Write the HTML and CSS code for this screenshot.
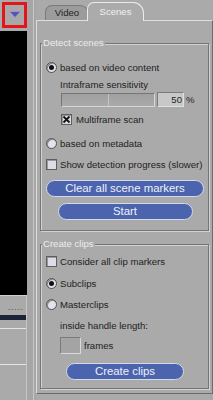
FILE: index.html
```
<!DOCTYPE html>
<html>
<head>
<meta charset="utf-8">
<link rel="stylesheet" href="styles.css">
</head>
<body>
<div class="app">
  <div class="side">
    <div class="side-top">
      <div class="drop">
        <svg width="12" height="7" viewBox="0 0 12 7"><polygon points="0.5,0.5 11.5,0.5 6,6.5" fill="#5656b0" stroke="#9a9ad8" stroke-width="0.8"/></svg>
      </div>
    </div>
    <div class="monitor"></div>
    <div class="side-bottom">
      <div class="dots">.....</div>
      <div class="navbar"></div>
      <div class="sgap"></div>
      <div class="sbox"></div>
      <div class="sbox last"></div>
    </div>
  </div>
  <div class="strip"></div>
  <div class="main">
    <div class="tabs">
      <div class="tab video">Video</div>
      <div class="tab scenes">Scenes</div>
    </div>
    <div class="panel">
      <div class="group g1">
        <div class="legend">Detect scenes</div>
        <div class="row mt11"><span class="radio on"></span><span>based on video content</span></div>
        <div class="row mt3 ind">Intraframe sensitivity</div>
        <div class="slider-row mt1">
          <div class="track"><div class="tick"></div></div>
          <div class="numbox">50</div>
          <span class="pct">%</span>
        </div>
        <div class="row mt5 ind1 gap4"><span class="check"><svg width="9" height="9" viewBox="0 0 9 9"><path d="M1.5 1.5 L7.5 7.5 M7.5 1.5 L1.5 7.5" stroke="#111" stroke-width="1.8"/></svg></span><span>Multiframe scan</span></div>
        <div class="row mt10"><span class="radio"></span><span>based on metadata</span></div>
        <div class="row mt7"><span class="check"></span><span>Show detection progress (slower)</span></div>
        <div class="btn clear mt9">Clear all scene markers</div>
        <div class="btn start mt6">Start</div>
      </div>
      <div class="group g2">
        <div class="legend">Create clips</div>
        <div class="row mt4"><span class="check"></span><span>Consider all clip markers</span></div>
        <div class="row mt8"><span class="radio on"></span><span>Subclips</span></div>
        <div class="row mt7"><span class="radio"></span><span>Masterclips</span></div>
        <div class="row mt7 ind">inside handle length:</div>
        <div class="frames-row mt5"><div class="fbox"></div><span>frames</span></div>
        <div class="btn create mt9">Create clips</div>
      </div>
    </div>
  </div>
</div>
</body>
</html>
```
FILE: styles.css
```
* { box-sizing: border-box; margin: 0; padding: 0; }
body {
  margin: 0;
  width: 213px;
  height: 400px;
  overflow: hidden;
  background: #aaaaaa;
  font-family: "Liberation Sans", Arial, sans-serif;
  font-size: 9.6px;
  color: #1e1e1e;
}
.app { display: flex; width: 213px; height: 400px; }

.side { width: 27px; display: flex; flex-direction: column; }
.side-top { height: 31px; padding: 2px 0 2px 2px; }
.drop {
  width: 25px; height: 26px;
  border: 3px solid #e3141c;
  background: #a8a8a8;
  display: flex; align-items: center; justify-content: center;
  padding-bottom: 2px;
}
.monitor { height: 264px; background: #000; }
.side-bottom {
  flex: 1;
  display: flex; flex-direction: column;
  border-top: 1px solid #cfcfcf;
  border-right: 1px solid #c6c6c6;
}
.dots {
  height: 19px; padding-top: 8px; padding-right: 2px;
  text-align: right; font-size: 8px; line-height: 8px;
  letter-spacing: 1px; color: #2a2a2a;
}
.navbar { height: 5px; background: #1b2336; }
.sgap { height: 8px; }
.sbox { height: 36px; border-top: 1px solid #e4e4e4; }
.sbox.last { flex: 1; }

.strip {
  width: 9px;
  background: linear-gradient(to right, #a6a6a6 0 6px, #c9c9c9 6px 7px, #a6a6a6 7px);
}

.main { width: 177px; display: flex; flex-direction: column; }
.tabs { height: 20px; display: flex; align-items: flex-end; padding-left: 9px; }
.tab { text-align: center; border-bottom: none; }
.video {
  width: 44px; height: 15px;
  background: #9c9c9c;
  border: 1px solid #7a7a7a; border-bottom: none;
  border-radius: 7px 9px 0 0;
  line-height: 13px;
}
.scenes {
  width: 57px; height: 19px; margin-left: -2px; margin-bottom: -1px;
  background: #ababab;
  border: 1px solid #ebebeb; border-bottom: none;
  border-radius: 7px 11px 0 0;
  color: #f2f2f2;
  line-height: 17px;
  position: relative; z-index: 1;
}
.panel {
  border: 1px solid;
  border-color: #dedede #6c6c6c #6c6c6c #dedede;
  padding: 22px 3px 4px 3px;
}
.group {
  border: 1px solid #767676;
  box-shadow: inset 1px 1px 0 #d2d2d2, 1px 1px 0 #d2d2d2;
  padding: 0 4px 10px 5px;
}
.g2 { margin-top: 13px; padding-bottom: 8px; }
.legend {
  display: block; width: fit-content;
  margin: -7px 0 0 -4px; padding: 0 1px;
  line-height: 12px; background: #aaaaaa; color: #ececec;
}
.row { display: flex; align-items: center; height: 14px; gap: 3px; white-space: nowrap; }
.ind { padding-left: 14px; }
.ind1 { padding-left: 15px; }
.gap4 { gap: 4px; }
.mt1 { margin-top: 1px; } .mt3 { margin-top: 3px; } .mt4 { margin-top: 4px; }
.mt5 { margin-top: 5px; } .mt6 { margin-top: 6px; } .mt7 { margin-top: 7px; }
.mt8 { margin-top: 8px; } .mt9 { margin-top: 9px; } .mt10 { margin-top: 10px; }
.mt11 { margin-top: 11px; }

.radio {
  width: 11px; height: 11px; flex: none;
  border-radius: 50%;
  border: 1px solid #505050;
  background: #e2e3ec;
  box-shadow: inset 1px 1px 0 #8a8a8a;
  display: flex; align-items: center; justify-content: center;
}
.radio.on::after {
  content: ""; width: 5px; height: 5px; border-radius: 50%; background: #111;
}
.check {
  width: 11px; height: 11px; flex: none;
  border: 1px solid #5e5e5e;
  background: #dcdde6;
  box-shadow: inset 1px 1px 0 #9a9a9a;
  display: flex; align-items: center; justify-content: center;
}

.slider-row { display: flex; align-items: center; height: 15px; padding-left: 15px; }
.track {
  width: 94px; height: 14px;
  border: 1px solid; border-color: #767676 #d6d6d6 #d6d6d6 #767676;
  background: linear-gradient(#a0a0a0, #aaaaaa);
  display: flex; padding-left: 46px;
}
.tick { width: 1px; height: 100%; background: #c4c4c4; }
.numbox {
  width: 27px; height: 15px; margin-left: 2px;
  border: 1px solid; border-color: #7a7a7a #e0e0e0 #e0e0e0 #7a7a7a;
  background: #c8c8c8;
  text-align: right; line-height: 13px; padding-right: 1px;
}
.pct { margin-left: 2px; }

.btn {
  display: block; margin-left: auto; margin-right: auto;
  height: 17px; border-radius: 9px;
  background: #4b64ad;
  border: 1px solid #d3daec;
  color: #eef1fb;
  font-size: 11.4px; line-height: 15px;
  text-align: center; white-space: nowrap;
}
.clear { width: 158px; }
.start { width: 135px; }
.create { width: 118px; }

.frames-row { display: flex; align-items: center; height: 17px; padding-left: 14px; gap: 3px; }
.fbox {
  width: 21px; height: 17px;
  border: 1px solid; border-color: #7a7a7a #dadada #dadada #7a7a7a;
  background: #a4a4a4;
}
```
